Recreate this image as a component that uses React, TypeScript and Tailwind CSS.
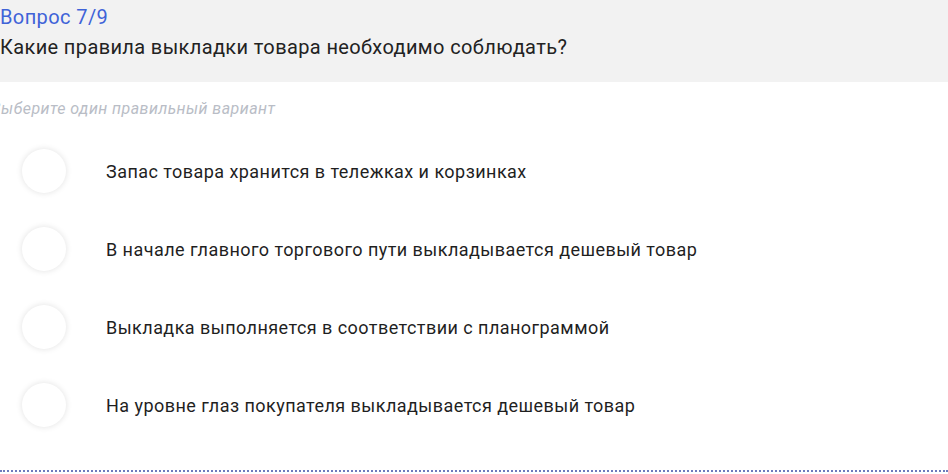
const options = [
  "Запас товара хранится в тележках и корзинках",
  "В начале главного торгового пути выкладывается дешевый товар",
  "Выкладка выполняется в соответствии с планограммой",
  "На уровне глаз покупателя выкладывается дешевый товар",
];

export default function App() {
  return (
    <div
      className="w-[948px] h-[474px] bg-white overflow-hidden flex flex-col"
      style={{ fontFamily: "Roboto, 'Noto Sans', sans-serif" }}
    >
      <div className="h-[82px] bg-[#f2f2f2] flex flex-col pt-[4px]">
        <div className="text-[20px] leading-[26px] tracking-[0.4px] text-[#3f63d8]">Вопрос 7/9</div>
        <div className="text-[20px] leading-[26px] tracking-[0.37px] text-[#222222] mt-[4px]">
          Какие правила выкладки товара необходимо соблюдать?
        </div>
      </div>
      <div className="mt-[17px] ml-[-9px] text-[16px] leading-[20px] tracking-[0.45px] italic text-[#b9bdc6] whitespace-nowrap">
        Выберите один правильный вариант
      </div>
      <div className="flex flex-col mt-[30px] gap-[34px]">
        {options.map((o) => (
          <label key={o} className="flex items-center h-[44px] cursor-pointer">
            <span className="ml-[22px] w-[44px] h-[44px] rounded-full bg-white shadow-[0_0_6px_rgba(0,0,0,0.12)] shrink-0" />
            <span className="ml-[40px] text-[18px] tracking-[0.45px] text-[#1f1f1f]">{o}</span>
          </label>
        ))}
      </div>
      <div className="mt-auto mb-[2px] border-b-2 border-dotted border-[#6d7bbd]" />
    </div>
  );
}
